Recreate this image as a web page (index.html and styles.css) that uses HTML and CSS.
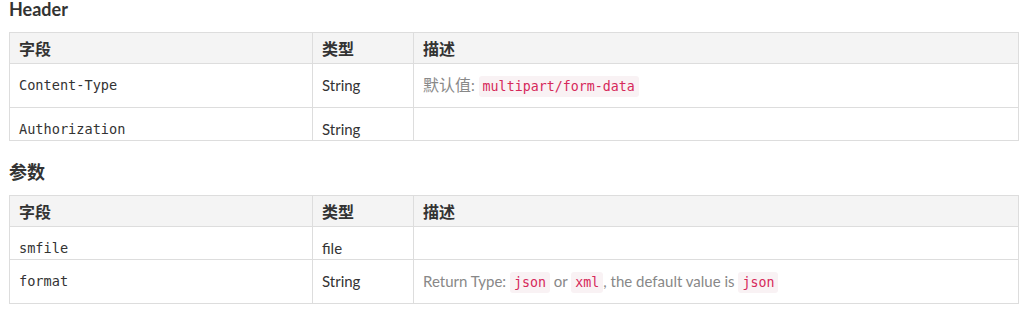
FILE: index.html
```html
<!DOCTYPE html>
<html lang="zh">
<head>
  <meta charset="UTF-8" />
  <title>API</title>
  <link rel="stylesheet" href="styles.css">
</head>
<body>
  <div class="doc">
    <h3>Header</h3>
    <table class="params">
      <thead>
        <tr><th class="col-field">字段</th><th class="col-type">类型</th><th>描述</th></tr>
      </thead>
      <tbody>
        <tr class="has-code">
          <td class="mono">Content-Type</td>
          <td>String</td>
          <td class="desc"><span class="cjk">默认值</span>: <code>multipart/form-data</code></td>
        </tr>
        <tr>
          <td class="mono">Authorization</td>
          <td>String</td>
          <td class="desc"></td>
        </tr>
      </tbody>
    </table>

    <h3>参数</h3>
    <table class="params">
      <thead>
        <tr><th class="col-field">字段</th><th class="col-type">类型</th><th>描述</th></tr>
      </thead>
      <tbody>
        <tr>
          <td class="mono">smfile</td>
          <td>file</td>
          <td class="desc"></td>
        </tr>
        <tr class="has-code">
          <td class="mono">format</td>
          <td>String</td>
          <td class="desc">Return Type: <code>json</code> or <code>xml</code>, the default value is <code>json</code></td>
        </tr>
      </tbody>
    </table>
  </div>
</body>
</html>
```

FILE: styles.css
```css
:root {
  --text: #333;
  --muted: #888;
  --border: #dddddd;
  --head-bg: #f4f4f4;
  --code: #d6285a;
  --code-bg: #f9f2f4;
}

* { box-sizing: border-box; }

body {
  margin: 0;
  background: #fff;
  color: var(--text);
  font-family: Lato, "Noto Sans CJK SC", sans-serif;
  font-size: 15px;
}

.doc {
  padding: 0 7px 0 9px;
}

h3 {
  margin: 0 0 14px;
  font-size: 18px;
  line-height: 18px;
  font-weight: 700;
}

.params {
  width: 100%;
  border-collapse: collapse;
  margin-bottom: 22px;
}

.params th,
.params td {
  border: 1px solid var(--border);
  text-align: left;
  padding: 0 9px;
}

.params th {
  height: 31px;
  background: var(--head-bg);
  font-size: 16px;
  font-weight: 700;
  line-height: 19px;
  vertical-align: middle;
}

.col-field { width: 303px; }
.col-type { width: 101px; }

.params td {
  height: 33px;
  vertical-align: top;
  line-height: 20px;
  padding-top: 11px;
}

.params tr.has-code td { height: 44px; }

.mono {
  font-family: "DejaVu Sans Mono", monospace;
  font-size: 13.6px;
}

.desc { color: var(--muted); }
.cjk { font-size: 16px; }

code {
  font-family: "DejaVu Sans Mono", monospace;
  font-size: 13.3px;
  line-height: 1;
  color: var(--code);
  background: var(--code-bg);
  border-radius: 3px;
  padding: 3px 4px;
}
```
